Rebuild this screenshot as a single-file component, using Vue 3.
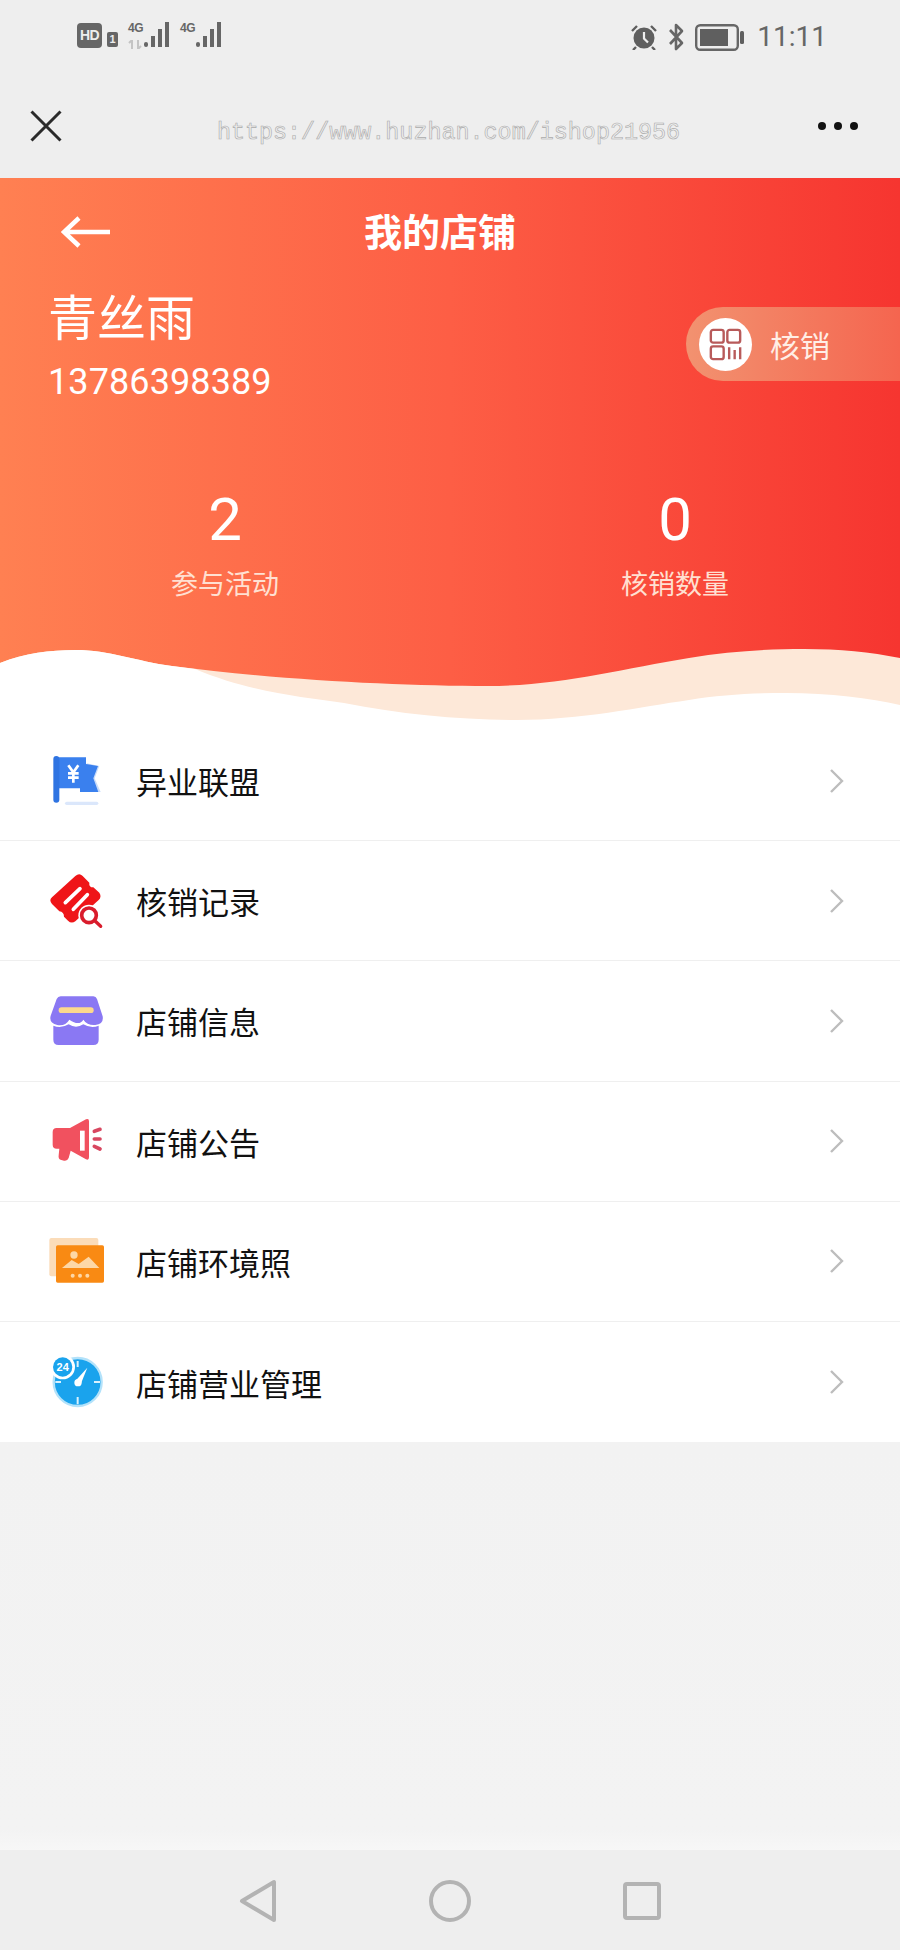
<script setup>
const rows = [
  { name: '异业联盟', icon: 'flag' },
  { name: '核销记录', icon: 'ticket' },
  { name: '店铺信息', icon: 'store' },
  { name: '店铺公告', icon: 'horn' },
  { name: '店铺环境照', icon: 'photo' },
  { name: '店铺营业管理', icon: 'clock' }
];
</script>

<template>
  <div class="page">
    <div class="statusbar">
      <div class="status-left">
        <span class="hd">HD</span>
        <span class="sim">1</span>
        <div class="net">
          <span class="net-label">4G</span>
          <svg width="15" height="9" viewBox="0 0 15 9" class="arrows"><path d="M4 0v9M1 3l3-3M10 0v9M10 9l3-3" stroke="#c4c4c4" stroke-width="2" fill="none"/></svg>
        </div>
        <svg class="bars" width="26" height="26" viewBox="0 0 26 26"><rect x="0" y="20" width="4" height="5" rx="2" fill="#666"/><rect x="7" y="14" width="4" height="11" fill="#666"/><rect x="14" y="7" width="4" height="18" fill="#666"/><rect x="21" y="0" width="4" height="25" fill="#666"/></svg>
        <div class="net net2"><span class="net-label">4G</span></div>
        <svg class="bars" width="26" height="26" viewBox="0 0 26 26"><rect x="0" y="20" width="4" height="5" rx="2" fill="#666"/><rect x="7" y="14" width="4" height="11" fill="#666"/><rect x="14" y="7" width="4" height="18" fill="#666"/><rect x="21" y="0" width="4" height="25" fill="#666"/></svg>
      </div>
      <div class="status-right">
        <svg width="28" height="26" viewBox="0 0 28 26">
          <circle cx="14" cy="14" r="10.5" fill="#5f5f5f"/>
          <path d="M14 8v6.5l4 4" stroke="#eee" stroke-width="2.2" fill="none"/>
          <path d="M2 7l5-5M26 7l-5-5M6 23l-3 3M22 23l3 3" stroke="#5f5f5f" stroke-width="2.4"/>
        </svg>
        <svg class="bt" width="18" height="28" viewBox="0 0 18 28"><path d="M3 7l12 13-6 6V2l6 6L3 21" stroke="#666" stroke-width="2.6" fill="none" stroke-linejoin="round"/></svg>
        <svg class="batt" width="50" height="27" viewBox="0 0 50 27">
          <rect x="1.2" y="1.2" width="41.6" height="24.6" rx="4" fill="none" stroke="#666" stroke-width="2.4"/>
          <rect x="5" y="5" width="28" height="17" fill="#5f5f5f"/>
          <rect x="45" y="7" width="4" height="13" rx="1.5" fill="#5f5f5f"/>
        </svg>
        <span class="time">11:11</span>
      </div>
    </div>

    <div class="navbar">
      <svg width="32" height="32" viewBox="0 0 32 32"><path d="M1.5 1.5l29 29M30.5 1.5l-29 29" stroke="#2a2a2a" stroke-width="3"/></svg>
      <span class="watermark">https://www.huzhan.com/ishop21956</span>
      <div class="dots"><i></i><i></i><i></i></div>
    </div>

    <section class="hero">
      <div class="hero-head">
        <svg class="back" width="50" height="32" viewBox="0 0 50 32"><path d="M49 16H4M18 2L3 16l15 14" stroke="#fff" stroke-width="4.5" fill="none"/></svg>
        <h1>我的店铺</h1>
      </div>
      <div class="user-row">
        <div class="user">
          <div class="user-name">青丝雨</div>
          <div class="user-phone">13786398389</div>
        </div>
        <div class="verify">
          <span class="verify-icon">
            <svg width="33" height="33" viewBox="0 0 36 36" fill="none" stroke="#b85a5a" stroke-width="2.6">
              <rect x="2" y="2" width="14" height="14" rx="2.5"/>
              <rect x="20" y="2" width="14" height="14" rx="2.5"/>
              <rect x="2" y="20" width="14" height="14" rx="2.5"/>
              <path d="M22 21v13M28 24v10M34 21v13"/>
            </svg>
          </span>
          <span>核销</span>
        </div>
      </div>
      <div class="stats">
        <div class="stat">
          <div class="stat-num">2</div>
          <div class="stat-label">参与活动</div>
        </div>
        <div class="stat">
          <div class="stat-num">0</div>
          <div class="stat-label">核销数量</div>
        </div>
      </div>
      <svg class="wave" viewBox="0 0 900 76" preserveAspectRatio="none">
        <path fill="#fde8d8" d="M0 18C25 8 50 5 75 5C110 5 135 16 172 21C280 35 400 41 488 41C560 41 620 24 689 13C730 6 770 4 804 4C840 4 870 7 900 13V76H0Z"/>
        <path fill="#fff" d="M0 18C25 8 50 5 75 5C110 5 135 16 172 21L195 24C250 47 300 52 344 58C400 69 460 75 517 75C580 75 640 62 689 55C720 50 750 48 786 48C830 48 870 53 900 60V76H0Z"/>
      </svg>
    </section>

    <ul class="menu">
      <li v-for="row in rows" :key="row.name" class="menu-row">
        <svg v-if="row.icon === 'flag'" class="icon" viewBox="48 63 180 180">
          <rect x="105" y="215" width="100" height="10" rx="5" fill="#dbe7fb"/>
          <path d="M170 100L208 108L194 145L212 186L165 186Z" fill="#c9dcfa"/>
          <path d="M84 82H168V102L204 108L190 145L205 186H150V175H84Z" fill="#3a80ee"/>
          <rect x="70" y="78" width="18" height="140" rx="9" fill="#2f74e2"/>
          <path d="M115 106L130 127L145 106M130 127V158M114 130H146M114 143H146" stroke="#fff" stroke-width="8" fill="none"/>
        </svg>
        <svg v-else-if="row.icon === 'ticket'" class="icon" viewBox="48 65 180 180">
          <path d="M136 80Q148 70 158 80L178 100Q176 114 190 114L208 130Q216 142 206 152L136 216Q124 224 114 214L102 202Q102 188 88 186L66 164Q56 152 66 144Z" fill="#ef1518"/>
          <path d="M106 160L150 118M130 180L172 136" stroke="#fff" stroke-width="11" stroke-linecap="round"/>
          <circle cx="177" cy="198" r="32" fill="#fff"/>
          <circle cx="177" cy="198" r="22" fill="#fff" stroke="#d91c2c" stroke-width="11"/>
          <path d="M196 216L212 231" stroke="#d91c2c" stroke-width="10" stroke-linecap="round"/>
        </svg>
        <svg v-else-if="row.icon === 'store'" class="icon" viewBox="48 66 180 180">
          <path d="M92 82H190Q198 82 201 90L218 142Q222 166 196 168Q172 170 160 152Q148 172 118 152Q106 172 82 168Q56 162 62 140L80 90Q84 82 92 82Z" fill="#8a78f3"/>
          <rect x="86" y="115" width="105" height="17" rx="8.5" fill="#fcd98d"/>
          <path d="M70 170Q92 180 116 166Q138 180 160 166Q184 180 206 170V212Q206 228 190 228H86Q70 228 70 212Z" fill="#8a78f3"/>
        </svg>
        <svg v-else-if="row.icon === 'horn'" class="icon" viewBox="48 67 180 180">
          <path d="M80 118H120L168 92Q177 88 177 98V206Q177 216 168 212L122 186L116 208Q112 218 102 216L94 214Q84 212 86 200L88 180H80Q68 180 68 168V130Q68 118 80 118Z" fill="#f1515f"/>
          <rect x="150" y="126" width="14" height="60" fill="#fff"/>
          <path d="M193 128L210 122M193 151H210M193 173L210 181" stroke="#d84760" stroke-width="11" stroke-linecap="round"/>
        </svg>
        <svg v-else-if="row.icon === 'photo'" class="icon" viewBox="48 69 180 180">
          <rect x="58" y="90" width="147" height="115" rx="6" fill="#fbdcb9"/>
          <rect x="78" y="112" width="144" height="112" rx="5" fill="#f98a13"/>
          <circle cx="132" cy="141" r="11" fill="#fdd7a6"/>
          <path d="M96 180L125 156L146 168L176 146L208 180Z" fill="#fdd7a6"/>
          <circle cx="128" cy="203" r="6" fill="#fdd7a6"/>
          <circle cx="150" cy="203" r="6" fill="#fdd7a6"/>
          <circle cx="172" cy="203" r="6" fill="#fdd7a6"/>
        </svg>
        <svg v-else class="icon" viewBox="48 55 180 180">
          <circle cx="143" cy="145" r="72" fill="#1aa3ed" stroke="#b3e2fa" stroke-width="7"/>
          <path d="M143 82V100M143 190V212M76 145H93M192 145H210" stroke="#d9f1fd" stroke-width="6"/>
          <path d="M136 142L172 102L152 152Z" fill="#fff"/>
          <circle cx="144" cy="147" r="11" fill="#fff"/>
          <circle cx="98" cy="100" r="37" fill="#fff"/>
          <circle cx="98" cy="100" r="29" fill="#1aa3ed"/>
          <text x="98" y="112" text-anchor="middle" font-family="Liberation Sans" font-weight="700" font-size="33" fill="#fff">24</text>
        </svg>
        <span class="menu-name">{{ row.name }}</span>
        <svg class="chevron" width="16" height="26" viewBox="0 0 16 26"><path d="M2 2l11 11L2 24" stroke="#bdbdbd" stroke-width="2.4" fill="none"/></svg>
      </li>
    </ul>

    <div class="spacer"></div>

    <div class="sysnav">
      <svg width="38" height="44" viewBox="0 0 38 44"><path d="M35 3V41L3 22Z" fill="none" stroke="#b3b3b3" stroke-width="4" stroke-linejoin="round"/></svg>
      <svg width="42" height="42" viewBox="0 0 42 42"><circle cx="21" cy="21" r="19" fill="none" stroke="#b3b3b3" stroke-width="4"/></svg>
      <svg width="38" height="38" viewBox="0 0 38 38"><rect x="2" y="2" width="34" height="34" rx="2" fill="none" stroke="#b3b3b3" stroke-width="4"/></svg>
    </div>
  </div>
</template>

<style scoped>
.page {
  width: 900px; height: 1950px;
  display: flex; flex-direction: column;
  background: #f3f3f3;
  font-family: "Noto Sans CJK SC", "Noto Sans", sans-serif;
  overflow: hidden;
}
.statusbar {
  height: 90px; flex: none;
  background: #eee;
  display: flex; justify-content: space-between; align-items: flex-start;
  padding: 22px 73px 0 77px;
  box-sizing: border-box;
}
.status-left, .status-right { display: flex; align-items: flex-start; }
.hd {
  width: 25px; height: 25px; border-radius: 4px;
  background: #666; color: #eee;
  font: 700 14px/25px "Liberation Sans", sans-serif;
  letter-spacing: -0.5px;
  text-align: center;
  margin-top: 1px;
}
.sim {
  width: 11px; height: 15px; margin: 10px 0 0 5px;
  background: #666; color: #eee; border-radius: 2px;
  font: 700 11px/15px "Liberation Sans", sans-serif;
  text-align: center;
}
.net { width: 15px; margin-left: 10px; display: flex; flex-direction: column; }
.net2 { margin-left: 10px; }
.net-label {
  font: 700 12px/13px "Liberation Sans Narrow", "Liberation Sans", sans-serif;
  color: #666;
  letter-spacing: -0.5px;
}
.arrows { margin-top: 5px; }
.bars { margin: 0 0 0 1px; }
.status-right { align-items: center; height: 30px; }
.bt { margin-left: 9px; }
.batt { margin-left: 10px; }
.time {
  margin-left: 12px;
  font: 400 28px/30px Roboto, sans-serif;
  color: #666;
}
.navbar {
  height: 88px; flex: none;
  background: #eee;
  display: flex; align-items: center; justify-content: space-between;
  padding: 0 42px 16px 30px;
  box-sizing: border-box;
}
.watermark {
  font: 400 23.4px/30px "Liberation Mono", monospace;
  color: #eee;
  -webkit-text-stroke: 0.6px #aaa;
  margin-top: 14px;
  margin-left: 17px;
}
.dots { display: flex; gap: 8px; }
.dots i { width: 8px; height: 8px; border-radius: 50%; background: #111; }
.hero {
  position: relative;
  height: 543px; flex: none;
  background: linear-gradient(90deg, #ff8052 0%, #fd5e45 50%, #f63530 100%);
  color: #fff;
  box-sizing: border-box;
}
.hero-head {
  position: relative;
  height: 104px;
  display: flex; align-items: center; justify-content: center;
  padding-right: 20px;
}
.hero-head h1 { margin: 0; font-size: 38px; font-weight: 700; line-height: 50px; }
.back { position: absolute; left: 61px; top: 38px; }
.user-row { display: flex; justify-content: space-between; align-items: flex-start; padding-left: 48px; }
.user-name { font-size: 49px; line-height: 66px; }
.user-phone { font-size: 36px; line-height: 68px; font-family: Roboto, sans-serif; letter-spacing: 0.1px; }
.verify {
  margin-top: 25px;
  width: 214px; height: 74px;
  border-radius: 37px 0 0 37px;
  background: linear-gradient(90deg, #f29270 0%, #f5654f 100%);
  display: flex; align-items: center; gap: 18px;
  padding-left: 13px;
  box-sizing: border-box;
  font-size: 30px;
  color: #ffeee6;
}
.verify-icon {
  width: 53px; height: 53px; border-radius: 50%;
  background: #fff;
  display: flex; align-items: center; justify-content: center;
}
.stats { display: grid; grid-template-columns: 450px 450px; margin-top: 69px; }
.stat { text-align: center; }
.stat-num { font-family: Roboto, sans-serif; font-size: 60px; line-height: 70px; }
.stat-label { margin-top: 8px; font-size: 27px; line-height: 40px; color: #ffe0d2; }
.wave { position: absolute; left: 0; bottom: 0; width: 900px; height: 76px; display: block; }
.menu { list-style: none; margin: 0; padding: 0; background: #fff; flex: none; }
.menu-row {
  height: 120.2px;
  box-sizing: border-box;
  display: flex; align-items: center;
  padding: 0 55px 0 46px;
  border-bottom: 1px solid #efefef;
}
.menu-row:last-child { border-bottom: none; }
.icon { width: 60px; height: 60px; flex: none; }
.menu-name { flex: 1; margin-left: 30px; font-size: 31px; color: #111; }
.chevron { flex: none; }
.spacer { flex: 1; background: linear-gradient(180deg, #f2f2f2 0%, #f3f3f3 95%, #f7f7f7 100%); }
.sysnav {
  height: 100px; flex: none;
  background: #eee;
  display: flex; align-items: center;
  justify-content: space-between;
  padding: 2px 239px 0 239px;
  box-sizing: border-box;
}
</style>
